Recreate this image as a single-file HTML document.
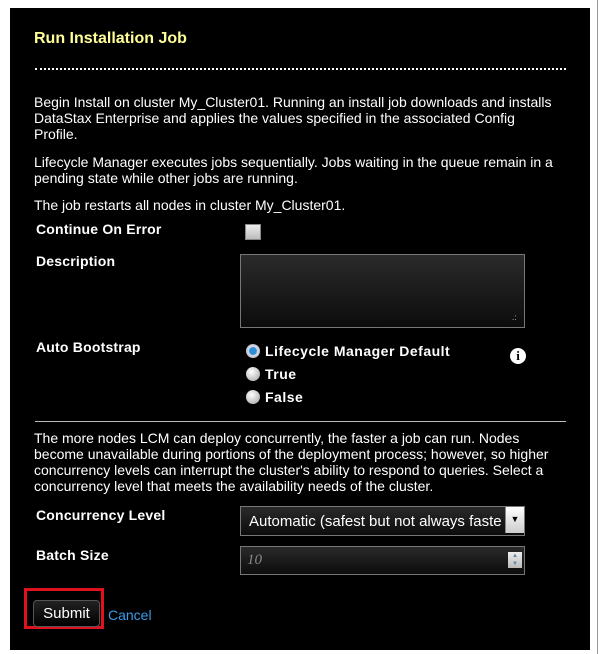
<!DOCTYPE html>
<html><head><style>
body{margin:0;width:602px;height:654px;background:#fff;position:relative;overflow:hidden;font-family:"Liberation Sans",Arial,sans-serif;}
#p{position:absolute;left:10px;top:8px;width:580px;height:642px;background:#000;color:#fff;}
.a{position:absolute;}
.t{font-size:14px;line-height:16px;}
.l{font-size:14px;font-weight:bold;left:26px;letter-spacing:0.2px}
.rad{width:14px;height:14px;border-radius:50%;background:radial-gradient(circle at 40% 35%,#fff,#bbb 70%,#888);position:absolute;left:0;}
.ri{position:absolute;left:236px;font-size:14px;font-weight:bold;letter-spacing:0.5px}
.ri span{position:absolute;left:19px;top:-1px;white-space:nowrap;}
</style></head><body>
<div style="position:absolute;left:597px;top:0;width:1px;height:654px;background:#999"></div>
<div id="p">
<div class="a" style="left:24px;top:22px;font-size:16px;font-weight:bold;color:#ffff99">Run Installation Job</div>
<div class="a" style="left:25px;top:60px;width:531px;border-top:2px dotted #fff"></div>
<div class="a t" style="left:24px;top:86px;width:525px">Begin Install on cluster My_Cluster01. Running an install job downloads and installs DataStax Enterprise and applies the values specified in the associated Config Profile.</div>
<div class="a t" style="left:24px;top:146px;width:535px">Lifecycle Manager executes jobs sequentially. Jobs waiting in the queue remain in a pending state while other jobs are running.</div>
<div class="a t" style="left:24px;top:189px">The job restarts all nodes in cluster My_Cluster01.</div>
<div class="a l" style="top:213px">Continue On Error</div>
<div class="a" style="left:235px;top:216px;width:14px;height:14px;background:linear-gradient(#eee,#bbb);border:1px solid #888"></div>
<div class="a l" style="top:245px">Description</div>
<div class="a" style="left:230px;top:246px;width:283px;height:72px;border:1px solid #777;background:linear-gradient(#2a2a2a,#0c0c0c)"></div>
<div class="a" style="left:502px;top:306px;color:#ccc;font-size:8px;line-height:8px">.:</div>
<div class="a l" style="top:331px">Auto Bootstrap</div>
<div class="ri" style="top:336px"><div class="rad" style="background:radial-gradient(circle,#2a8fd6 35%,#dde 45%,#999)"></div><span>Lifecycle Manager Default</span></div>
<div class="ri" style="top:359px"><div class="rad"></div><span>True</span></div>
<div class="ri" style="top:382px"><div class="rad"></div><span>False</span></div>
<div class="a" style="left:500px;top:340px;width:16px;height:16px;border-radius:50%;background:#fff;color:#000;font:bold 13px 'Liberation Serif',serif;text-align:center;line-height:16px">i</div>
<div class="a" style="left:25px;top:413px;width:531px;border-top:1px solid #bbb"></div>
<div class="a t" style="left:24px;top:422px;width:535px">The more nodes LCM can deploy concurrently, the faster a job can run. Nodes become unavailable during portions of the deployment process; however, so higher concurrency levels can interrupt the cluster's ability to respond to queries. Select a concurrency level that meets the availability needs of the cluster.</div>
<div class="a l" style="top:499px">Concurrency Level</div>
<div class="a" style="left:230px;top:498px;width:283px;height:28px;border:1px solid #777;background:linear-gradient(#2a2a2a,#0c0c0c);overflow:hidden">
<div class="a" style="left:8px;top:6px;font-size:15px;white-space:nowrap;width:252px;overflow:hidden">Automatic (safest but not always faster)</div>
<div class="a" style="right:0;top:0;width:18px;height:26px;background:linear-gradient(#fff,#ccc);border-left:1px solid #888;color:#000;font-size:9px;text-align:center;line-height:24px">▼</div></div>
<div class="a l" style="top:539px">Batch Size</div>
<div class="a" style="left:230px;top:538px;width:283px;height:27px;border:1px solid #777;background:linear-gradient(#2a2a2a,#0c0c0c)">
<div class="a" style="left:6px;top:5px;font:italic 15px 'Liberation Serif',serif;color:#888">10</div>
<div class="a" style="right:2px;top:5px;width:14px;height:16px;background:linear-gradient(#eee,#bbb);color:#58a;font-size:6px;line-height:8px;text-align:center">▲<br>▼</div></div>
<div class="a" style="left:14px;top:580px;width:80px;height:41px;border:3px solid #e0121e;box-sizing:border-box"></div>
<div class="a" style="left:23px;top:592px;width:67px;height:27px;box-sizing:border-box;border:1px solid #555;border-radius:4px;background:linear-gradient(#222,#000);font-size:15px;text-align:center;line-height:25px">Submit</div>
<div class="a" style="left:98px;top:599px;font-size:14px;color:#3a9ce8">Cancel</div>
</div>
</body></html>
